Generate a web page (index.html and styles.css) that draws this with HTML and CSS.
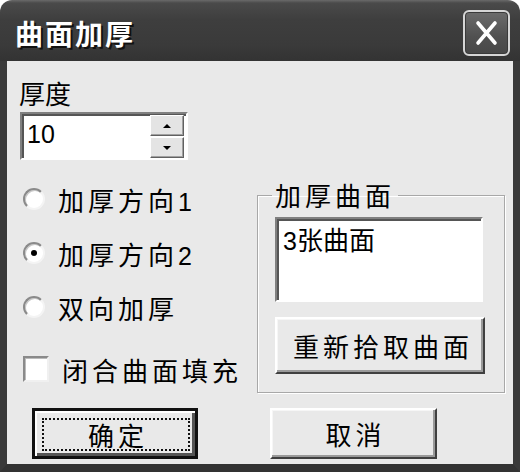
FILE: index.html
```html
<!DOCTYPE html>
<html lang="zh-CN">
<head>
<meta charset="utf-8">
<title>曲面加厚</title>
<link rel="stylesheet" href="styles.css">
</head>
<body>
<div class="window">
  <div class="titlebar">
    <span class="title">曲面加厚</span>
    <div class="close">
      <svg width="43" height="42" viewBox="0 0 43 42"><path d="M13 11 L30 31 M30 11 L13 31" stroke="#fff" stroke-width="3.6" stroke-linecap="round"/></svg>
    </div>
  </div>
  <div class="client">
    <div class="main">
      <div class="left">
        <div class="lbl">厚度</div>
        <div class="spin">
          <span class="spin-val">10</span>
          <div class="spin-btns">
            <div class="sb"><span class="tri-up"></span></div>
            <div class="sb"><span class="tri-down"></span></div>
          </div>
        </div>
        <div class="opt opt-first"><span class="radio"></span><span class="txt">加厚方向<span class="num">1</span></span></div>
        <div class="opt"><span class="radio checked"></span><span class="txt">加厚方向<span class="num">2</span></span></div>
        <div class="opt"><span class="radio"></span><span class="txt">双向加厚</span></div>
        <div class="opt opt-check"><span class="checkbox"></span><span class="txt">闭合曲面填充</span></div>
      </div>
      <fieldset class="group">
        <legend>加厚曲面</legend>
        <div class="list"><span class="num3">3</span>张曲面</div>
        <div class="btn wide">重新拾取曲面</div>
      </fieldset>
    </div>
    <div class="footer">
      <div class="btn default"><span class="focus">确定</span></div>
      <div class="btn cancel">取消</div>
    </div>
  </div>
</div>
</body>
</html>
```

FILE: styles.css
```css
html, body {
  margin: 0;
  padding: 0;
  background: #ffffff;
}
body {
  width: 520px;
  height: 472px;
  overflow: hidden;
  font-family: "Liberation Sans", "Noto Sans CJK SC", sans-serif;
  color: #000;
}
.window {
  width: 520px;
  height: 472px;
  display: flex;
  flex-direction: column;
}
.titlebar {
  height: 61px;
  flex: none;
  box-sizing: border-box;
  border-radius: 12px 12px 0 0;
  background: linear-gradient(#6a6a6a 0, #4a4a4a 3px, #3e3e3e 20px, #3a3a3a 45px, #333 61px);
  display: flex;
  justify-content: space-between;
  align-items: flex-start;
}
.title {
  margin-left: 15px;
  margin-top: 16px;
  font-family: "Noto Sans CJK SC", sans-serif;
  font-weight: bold;
  font-size: 28px;
  line-height: 34px;
  letter-spacing: 2px;
  color: #fff;
  text-shadow: 2px 2px 0 #111;
}
.close {
  margin-top: 10px;
  margin-right: 10px;
  width: 47px;
  height: 46px;
  box-sizing: border-box;
  border: 2px solid #d6d6d6;
  border-radius: 6px;
  background: linear-gradient(#6c6c6c, #505050 60%, #484848);
  box-shadow: inset 0 0 0 1px #3a3a3a;
}
.close svg { display: block; }
.client {
  flex: 1;
  background: #e9e9e9;
  border-left: 7px solid #3a3a3a;
  border-right: 7px solid #3a3a3a;
  border-bottom: 8px solid #333;
  padding-top: 17px;
  display: flex;
  flex-direction: column;
}
.main {
  display: flex;
  height: 330px;
}
.left {
  width: 250px;
  box-sizing: border-box;
  padding-left: 13px;
}
.lbl {
  font-size: 26px;
  line-height: 30px;
  letter-spacing: 0;
  margin-left: -1px;
  font-family: "Noto Sans CJK SC", sans-serif;
}
.spin {
  margin-top: 4px;
  width: 168px;
  height: 48px;
  box-sizing: border-box;
  background: #fff;
  border: 2px solid;
  border-color: #808080 #ffffff #ffffff #808080;
  box-shadow: inset 2px 2px 0 #555;
  display: flex;
}
.spin-val {
  flex: 1;
  padding-left: 5px;
  font-size: 25px;
  line-height: 40px;
}
.spin-btns {
  width: 34px;
  margin-right: 2px;
  margin-top: 1px;
  display: flex;
  flex-direction: column;
  gap: 1px;
}
.sb {
  height: 21px;
  box-sizing: border-box;
  background: #e4e4e4;
  border: 1px solid;
  border-color: #fff #606060 #606060 #fff;
  box-shadow: inset -1px -1px 0 #a0a0a0;
  display: flex;
  align-items: center;
  justify-content: center;
}
.tri-up {
  width: 0; height: 0;
  border-left: 4px solid transparent;
  border-right: 4px solid transparent;
  border-bottom: 4px solid #000;
}
.tri-down {
  width: 0; height: 0;
  border-left: 4px solid transparent;
  border-right: 4px solid transparent;
  border-top: 4px solid #000;
}
.opt {
  height: 40px;
  display: flex;
  align-items: center;
  margin-top: 14px;
  font-size: 26px;
  font-family: "Noto Sans CJK SC", sans-serif;
  letter-spacing: 4px;
}
.opt-first { margin-top: 19px; }
.opt-check { margin-top: 22px; }
.num {
  font-family: "Liberation Sans", sans-serif;
  font-size: 25px;
  letter-spacing: 0;
}
.radio {
  width: 22px;
  height: 22px;
  margin-left: 3px;
  margin-right: 13px;
  box-sizing: border-box;
  border-radius: 50%;
  background: #fff;
  border: 2px solid;
  border-color: #8a8a8a #f4f4f4 #f4f4f4 #8a8a8a;
  box-shadow: inset 1px 1px 0 #c8c8c8;
  position: relative;
  flex: none;
}
.radio.checked::after {
  content: "";
  position: absolute;
  left: 6px;
  top: 6px;
  width: 6px;
  height: 6px;
  border-radius: 50%;
  background: #000;
}
.checkbox {
  width: 26px;
  height: 26px;
  margin-left: 3px;
  margin-right: 13px;
  box-sizing: border-box;
  background: #fff;
  border: 2px solid;
  border-color: #8a8a8a #f0f0f0 #f0f0f0 #8a8a8a;
  box-shadow: inset 1px 1px 0 #bbb;
  flex: none;
}
.group {
  margin: 102px 0 0 0;
  width: 248px;
  height: 213px;
  box-sizing: border-box;
  padding: 7px 0 0 17px;
  border: 1px solid #a8a8a8;
  box-shadow: inset 1px 1px 0 #fff, 1px 1px 0 #fff;
  min-width: 0;
}
.group legend {
  padding: 0 3px;
  margin-left: -3px;
  font-size: 26px;
  line-height: 30px;
  letter-spacing: 4px;
  font-family: "Noto Sans CJK SC", sans-serif;
}
.list {
  width: 208px;
  height: 85px;
  box-sizing: border-box;
  background: #fff;
  border: 2px solid;
  border-color: #808080 #ffffff #ffffff #808080;
  box-shadow: inset 2px 2px 0 #555;
  padding: 5px 0 0 6px;
  font-size: 26px;
  line-height: 30px;
  font-family: "Noto Sans CJK SC", sans-serif;
}
.num3 {
  font-family: "Liberation Sans", sans-serif;
  font-size: 25px;
}
.btn {
  box-sizing: border-box;
  background: #e9e9e9;
  border: 2px solid;
  border-color: #ffffff #404040 #404040 #ffffff;
  box-shadow: inset -2px -2px 0 #9a9a9a, inset 1px 1px 0 #f6f6f6;
  display: flex;
  align-items: center;
  justify-content: center;
  font-size: 26px;
  font-family: "Noto Sans CJK SC", sans-serif;
  letter-spacing: 4px;
}
.btn.wide {
  margin-top: 15px;
  width: 210px;
  height: 57px;
  padding-left: 6px;
}
.footer {
  margin-top: 0;
  padding-left: 25px;
  display: flex;
  gap: 72px;
}
.btn.default {
  width: 166px;
  height: 51px;
  border: 3px solid #111;
  box-shadow: inset 2px 2px 0 #fff, inset -3px -3px 0 #555;
  padding: 7px 5px 5px 7px;
}
.focus {
  flex: 1;
  align-self: stretch;
  border: 2px dotted #111;
  display: flex;
  align-items: center;
  justify-content: center;
  padding-left: 4px;
}
.btn.cancel {
  width: 167px;
  height: 51px;
  padding-left: 4px;
}
```
